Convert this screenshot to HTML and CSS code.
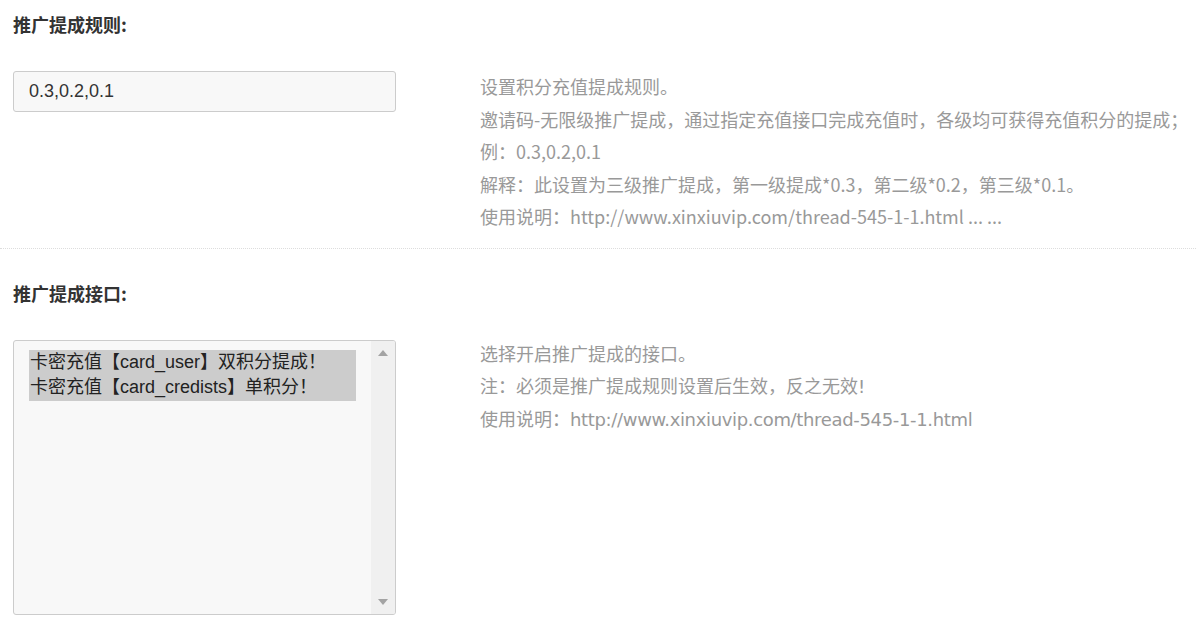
FILE: index.html
```html
<!DOCTYPE html>
<html lang="zh-CN">
<head>
<meta charset="utf-8">
<title>推广提成设置</title>
<link rel="stylesheet" href="styles.css">
</head>
<body>
<div class="section first">
  <div class="label">推广提成规则:</div>
  <div class="row">
    <div class="control">
      <div class="input">0.3,0.2,0.1</div>
    </div>
    <div class="help cjk">
      <p>设置积分充值提成规则。</p>
      <p>邀请码-无限级推广提成，通过指定充值接口完成充值时，各级均可获得充值积分的提成；</p>
      <p>例：0.3,0.2,0.1</p>
      <p>解释：此设置为三级推广提成，第一级提成*0.3，第二级*0.2，第三级*0.1。</p>
      <p>使用说明：http://www.xinxiuvip.com/thread-545-1-1.html ... ...</p>
    </div>
  </div>
</div>
<div class="section second">
  <div class="label">推广提成接口:</div>
  <div class="row">
    <div class="control">
      <div class="select">
        <div class="options">
          <div class="option">卡密充值【card_user】双积分提成！</div>
          <div class="option">卡密充值【card_credists】单积分！</div>
        </div>
        <div class="scrollbar">
          <span class="arrow up"></span>
          <span class="arrow down"></span>
        </div>
      </div>
    </div>
    <div class="help latin">
      <p>选择开启推广提成的接口。</p>
      <p>注：必须是推广提成规则设置后生效，反之无效!</p>
      <p>使用说明：<span class="url">http://www.xinxiuvip.com/thread-545-1-1.html</span></p>
    </div>
  </div>
</div>
</body>
</html>
```
FILE: styles.css
```css
html, body {
  margin: 0;
  padding: 0;
  background: #ffffff;
}
body {
  font-family: "Liberation Sans", "Noto Sans CJK SC", sans-serif;
  color: #333333;
  width: 1196px;
  height: 628px;
  overflow: hidden;
}
.section {
  padding-left: 13px;
}
.section.first {
  padding-top: 12px;
  padding-bottom: 15px;
  border-bottom: 1px dotted #dddddd;
}
.section.second {
  padding-top: 32px;
}
.label {
  font-family: "Noto Sans CJK SC", sans-serif;
  font-weight: 700;
  font-size: 18px;
  line-height: 24px;
  height: 24px;
  color: #333333;
  margin-bottom: 35px;
}
.row {
  display: flex;
  align-items: flex-start;
}
.control {
  width: 383px;
  flex: none;
  margin-right: 84px;
}
.input {
  box-sizing: border-box;
  height: 41px;
  border: 1px solid #cccccc;
  border-radius: 3px;
  background: #f8f8f8;
  padding: 0 15px;
  font-size: 18px;
  line-height: 39px;
  color: #333333;
}
.help {
  color: #999999;
  font-size: 18px;
  line-height: 32.5px;
  margin-top: -1px;
}
.help p {
  margin: 0;
  white-space: nowrap;
}
.help.cjk {
  font-family: "Noto Sans CJK SC", sans-serif;
}
.help.latin {
  font-family: "DejaVu Sans", "Noto Sans CJK SC", sans-serif;
}
.url {
  letter-spacing: -0.34px;
}
.select {
  box-sizing: border-box;
  height: 275px;
  border: 1px solid #cccccc;
  border-radius: 3px;
  background: #f8f8f8;
  display: flex;
  overflow: hidden;
}
.options {
  flex: 1;
  padding: 9px 15px 0 15px;
}
.option {
  background: #cccccc;
  color: #222222;
  font-size: 18px;
  line-height: 25.5px;
  white-space: nowrap;
  padding-left: 1px;
}
.scrollbar {
  width: 24px;
  flex: none;
  background: #f0f0f0;
  display: flex;
  flex-direction: column;
  justify-content: space-between;
  align-items: center;
  padding: 9px 0 9px;
}
.arrow {
  width: 0;
  height: 0;
  border-left: 5px solid transparent;
  border-right: 5px solid transparent;
}
.arrow.up {
  border-bottom: 6px solid #a3a3a3;
}
.arrow.down {
  border-top: 6px solid #a3a3a3;
}
```
